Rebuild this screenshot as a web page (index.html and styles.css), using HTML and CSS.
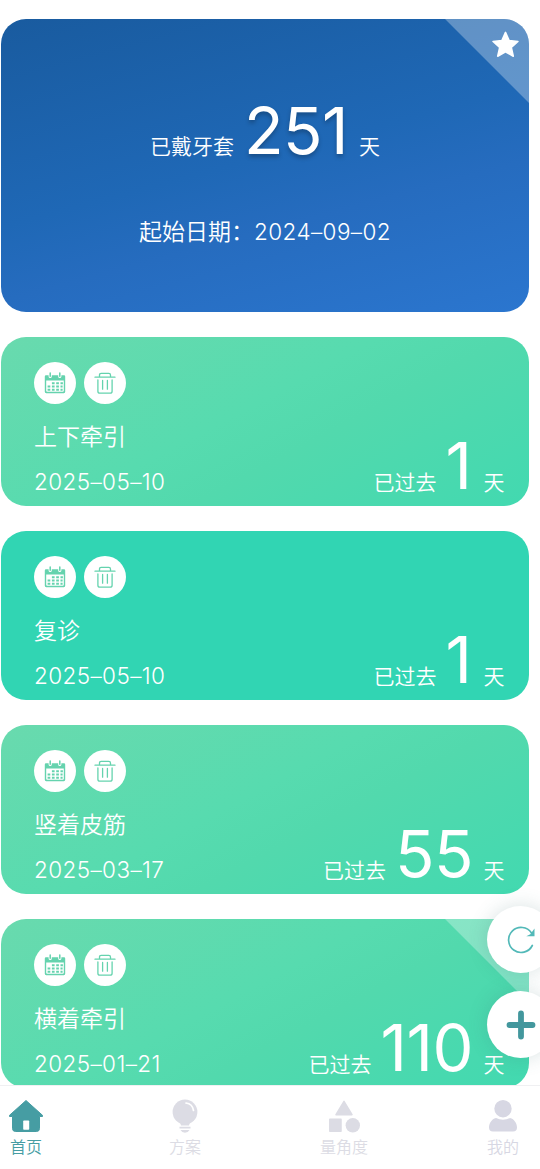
FILE: index.html
```html
<!DOCTYPE html>
<html lang="zh-CN">
<head>
<meta charset="utf-8">
<title>首页</title>
<link rel="stylesheet" href="styles.css">
</head>
<body>
<svg class="defs" aria-hidden="true">
  <symbol id="calendar" viewBox="0 0 22 22">
    <path fill="currentColor" fill-rule="evenodd" d="M2 3.200h2.600v1.300a1.600 1.600 0 0 0 3.200 0V3.200h6.400v1.300a1.600 1.600 0 0 0 3.200 0V3.200H20a1.200 1.200 0 0 1 1.200 1.200v15.400a1.400 1.400 0 0 1-1.400 1.400H2.200A1.400 1.400 0 0 1 .8 19.800V4.400A1.200 1.200 0 0 1 2 3.200zM2.200 8.500v10.300a1 1 0 0 0 1 1h15.600a1 1 0 0 0 1-1V8.500z"/>
    <path stroke="currentColor" stroke-width="1.500" stroke-linecap="round" d="M6.200 1v3.300M15.800 1v3.300"/>
    <path stroke="currentColor" stroke-width="2" stroke-dasharray="2.700 1.600" d="M7.900 11.200h11M3.600 14.500h15M3.600 17.700h15"/>
  </symbol>
  <symbol id="trash" viewBox="0 0 22 22">
    <path fill="none" stroke="currentColor" stroke-width="1.300" stroke-linecap="round" stroke-linejoin="round" d="M1 5.200h20M5.500 5V3q0-1.700 1.700-1.700h7.600q1.700 0 1.700 1.700v2M3.900 8v11.200q0 2 2 2h10.200q2 0 2-2V8M8.600 8.400v8.800M13.400 8.400v8.800"/>
  </symbol>
</svg>
<main class="list">
  <section class="hero">
    <div class="ribbon"></div>
    <svg class="star" viewBox="0 0 26 26"><path fill="#fff" stroke="#fff" stroke-width="1.500" stroke-linejoin="round" d="M13 1.300l3.500 7.900 8.500.9-6.400 5.700 1.900 8.500L13 20l-7.500 4.300 1.900-8.500L1 10.100l8.500-.9z"/></svg>
    <p class="worn"><span class="unit">已戴牙套</span><b class="count shade">251</b><span class="unit">天</span></p>
    <p class="start">起始日期：<span>2024–09–02</span></p>
  </section>
  <section class="card">
    <div class="actions"><i><svg><use href="#calendar"/></svg></i><i><svg><use href="#trash"/></svg></i></div>
    <h2>上下牵引</h2>
    <div class="row"><span class="date">2025–05–10</span><p class="past"><span>已过去</span><b class="count one">1</b><span>天</span></p></div>
  </section>
  <section class="card flat">
    <div class="actions"><i><svg><use href="#calendar"/></svg></i><i><svg><use href="#trash"/></svg></i></div>
    <h2>复诊</h2>
    <div class="row"><span class="date">2025–05–10</span><p class="past"><span>已过去</span><b class="count one">1</b><span>天</span></p></div>
  </section>
  <section class="card">
    <div class="actions"><i><svg><use href="#calendar"/></svg></i><i><svg><use href="#trash"/></svg></i></div>
    <h2>竖着皮筋</h2>
    <div class="row"><span class="date">2025–03–17</span><p class="past"><span>已过去</span><b class="count">55</b><span>天</span></p></div>
  </section>
  <section class="card">
    <div class="ribbon"></div>
    <div class="actions"><i><svg><use href="#calendar"/></svg></i><i><svg><use href="#trash"/></svg></i></div>
    <h2>横着牵引</h2>
    <div class="row"><span class="date">2025–01–21</span><p class="past"><span>已过去</span><b class="count">110</b><span>天</span></p></div>
  </section>
</main>
<div class="fabs">
  <button class="fab"><svg width="30" height="30" viewBox="0 0 30 30"><path fill="none" stroke="#52b9b8" stroke-width="1.700" stroke-linecap="round" d="M26.300 20.500A12.500 12.500 0 1 1 25.500 8"/><path fill="#52b9b8" d="M28.500 3.500v7.700h-8.200l4-2z"/></svg></button>
  <button class="fab"><svg width="30" height="30" viewBox="0 0 30 30"><path stroke="#43979d" stroke-width="5.800" stroke-linecap="round" d="M15 3.500v23M3.500 15h23"/></svg></button>
</div>
<nav class="tabs">
  <a class="tab active"><svg viewBox="0 0 36 36"><path fill="currentColor" stroke="currentColor" stroke-width="1" stroke-linejoin="round" d="M18 2.500 34.500 17.300v1.200H31.500v12q0 3-3 3h-21q-3 0-3-3v-12h-3v-1.200z"/><rect x="15.200" y="22.500" width="6" height="9.300" rx=".8" fill="#fff"/></svg><span>首页</span></a>
  <a class="tab"><svg viewBox="0 0 36 36"><circle cx="18" cy="14" r="12.400" fill="currentColor"/><path stroke="#fff" stroke-width="1.700" stroke-linecap="round" fill="none" d="M19 5q6.500.8 7.500 7.500"/><path fill="currentColor" d="M13 24h10l-1 3.500h-8zM12.500 28.800h11v1.600h-11zM13.500 32h9q-1.500 2.800-4.500 2.800t-4.500-2.800z"/></svg><span>方案</span></a>
  <a class="tab"><svg viewBox="0 0 36 36"><path fill="currentColor" stroke="currentColor" stroke-width="1.500" stroke-linejoin="round" d="M18 3.300 26 16.700H10zM3.800 21.300h11.200v12H3.800z"/><circle cx="26.800" cy="27.300" r="7.200" fill="currentColor"/></svg><span>量角度</span></a>
  <a class="tab me"><svg viewBox="0 0 36 36"><circle cx="18" cy="10.700" r="8.700" fill="currentColor"/><path fill="currentColor" d="M11 20q7 3.500 14 0c4.500 1 7 5.500 7 9.500q0 4-4 4H8q-4 0-4-4c0-4 2.500-8.500 7-9.500z"/></svg><span>我的</span></a>
</nav>
</body>
</html>
```
FILE: styles.css
```css
* { box-sizing: border-box; margin: 0; padding: 0; }
body {
  width: 540px; height: 1169px; overflow: hidden; position: relative;
  display: flex; flex-direction: column; background: #fff;
  font-family: Inter, "Noto Sans CJK SC", sans-serif; font-weight: 350;
}
.defs { position: absolute; width: 0; height: 0; }
.list { height: 1085px; padding: 19px 11px 0 1px; overflow: hidden; display: flex; flex-direction: column; gap: 25px; flex: none; }
.hero, .card { position: relative; overflow: hidden; border-radius: 25px; color: #fff; flex: none; }
.hero { height: 293px; background: linear-gradient(165deg, #195b9f 0%, #1f68b6 48%, #266cbf 65%, #2b76cf 100%); padding-top: 72px; display: flex; flex-direction: column; align-items: center; }
.ribbon { position: absolute; top: 0; right: 0; width: 84px; height: 84px; background: rgba(255,255,255,.3); clip-path: polygon(0 0, 100% 0, 100% 100%); }
.star { position: absolute; top: 12px; right: 10.500px; width: 27px; height: 27px; }
.worn, .past { display: flex; align-items: baseline; }
.worn { height: 80px; line-height: 80px; }
.unit, .past { font-size: 21px; }
.count { font-size: 65px; font-weight: 370; line-height: 50px; letter-spacing: -.5px; }
.worn .count { line-height: 80px; margin: 0 11px 0 10px; }
.shade { text-shadow: 0 3px 4px rgba(0,0,0,.25); }
.start { margin-top: 43px; height: 36px; line-height: 36px; font-size: 23px; display: flex; }
.start span, .date { font-size: 22.500px; letter-spacing: .4px; font-weight: 300; }
.card { height: 169px; padding: 25px 24.500px 0 33px; background: linear-gradient(152deg, #69daae 0%, #57dbaf 45%, #52d9ad 60%, #42d9b0 100%); }
.card.flat { background: #31d5b3; }
.actions { display: flex; gap: 8px; height: 42px; color: #65d3ae; }
.actions i { width: 42px; height: 42px; border-radius: 50%; background: #fff; display: grid; place-items: center; }
.actions svg { width: 22px; height: 22px; }
h2 { margin-top: 16px; height: 34px; line-height: 34px; font-size: 23px; font-weight: 350; }
.row { margin-top: -12px; height: 50px; display: flex; justify-content: space-between; align-items: baseline; line-height: 50px; }
.past { height: 50px; }
.past .count { margin: 0 10.500px 0 9px; position: relative; top: -1px; }
.past .one { margin: 0 12px 0 9px; }
.fabs { position: absolute; left: 487px; top: 906px; display: flex; flex-direction: column; gap: 18px; }
.fab { width: 67px; height: 67px; border: 0; border-radius: 50%; background: #fff; box-shadow: 0 0 20px rgba(60,110,110,.2); display: grid; place-items: center; }
.tabs { position: relative; height: 84px; flex: none; background: #fff; border-top: 1px solid #f0f0f2; display: flex; gap: 108px; padding: 12px 0 0 .5px; color: #dcdce4; }
.tab { width: 51px; flex: none; display: flex; flex-direction: column; align-items: center; font-size: 16px; line-height: 24px; white-space: nowrap; font-weight: 350; }
.tab svg { width: 36px; height: 36px; margin-bottom: 1px; }
.tab.active { color: #469da3; }
.me { color: #d7d7e3; }
```
